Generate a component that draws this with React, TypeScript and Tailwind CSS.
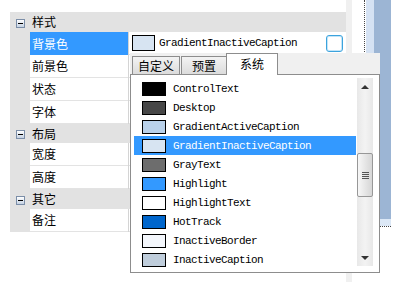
import React from 'react'

const sections = [
  { name: '样式', h: 'h-[20px]', items: ['背景色', '前景色', '状态', '字体'] },
  { name: '布局', h: 'h-[19px]', items: ['宽度', '高度'] },
  { name: '其它', h: 'h-[20px]', items: ['备注'] },
]

const colors = [
  { name: 'ControlText', color: '#000000' },
  { name: 'Desktop', color: '#474747' },
  { name: 'GradientActiveCaption', color: '#b9d1ea' },
  { name: 'GradientInactiveCaption', color: '#d7e4f2' },
  { name: 'GrayText', color: '#6d6d6d' },
  { name: 'Highlight', color: '#3399ff' },
  { name: 'HighlightText', color: '#ffffff' },
  { name: 'HotTrack', color: '#0066cc' },
  { name: 'InactiveBorder', color: '#f4f7fc' },
  { name: 'InactiveCaption', color: '#bfcddb' },
]

const mono = "font-['Liberation_Mono',monospace] text-[11px] tracking-[-0.6px]"

function MinusBox() {
  return (
    <div className="w-[9px] h-[9px] border border-[#7b8ea8] bg-gradient-to-b from-white to-[#c5d2e3] flex items-center justify-center">
      <div className="w-[5px] h-px bg-black" />
    </div>
  )
}

function ItemRow({ label, selected }: { label: string; selected?: boolean }) {
  return (
    <div className="flex h-[23px]">
      <div className="w-[20px] bg-[#e2e2e2]" />
      <div
        className={
          selected
            ? 'w-[98px] pl-[2px] flex items-center bg-[#3399ff] text-white'
            : 'w-[98px] pl-[2px] flex items-center border-b border-[#e3e3e3]'
        }
      >
        {label}
      </div>
      <div className="w-px bg-[#d4d4d4]" />
      <div className="flex-1 flex items-center border-b border-[#e3e3e3]">
        {selected && (
          <>
            <div className="ml-[3px] w-[23px] h-[16px] border border-black bg-[#d7e4f2]" />
            <span className={`ml-[4px] pt-[1px] ${mono}`}>GradientInactiveCaption</span>
            <div className="ml-auto mr-[3px] w-[17px] h-[17px] rounded-[3px] border border-[#3ca3dd] bg-white shadow-[inset_0_0_0_1px_#c3e5f8]" />
          </>
        )}
      </div>
    </div>
  )
}

function PropertyGrid() {
  return (
    <div className="w-[336px] flex flex-col">
      {sections.map((s, si) => (
        <div key={s.name}>
          <div className={`flex items-center bg-[#e2e2e2] ${s.h}`}>
            <div className="w-[20px] flex justify-center pt-[2px]">
              <MinusBox />
            </div>
            <span className="pl-[2px]">{s.name}</span>
          </div>
          {s.items.map((it, i) => (
            <ItemRow key={it} label={it} selected={si === 0 && i === 0} />
          ))}
        </div>
      ))}
    </div>
  )
}

function Tab({ label, active, w }: { label: string; active?: boolean; w: string }) {
  if (active) {
    return (
      <div className={`${w} h-[22px] -mb-px -ml-px relative z-10 border border-b-0 border-[#8d8d8d] bg-white flex items-center justify-center pb-[2px]`}>
        {label}
      </div>
    )
  }
  return (
    <div className={`${w} h-[18px] border border-b-0 border-[#8d8d8d] bg-gradient-to-b from-[#f3f3f3] to-[#dcdcdc] flex items-center justify-center`}>
      {label}
    </div>
  )
}

function Scrollbar() {
  return (
    <div className="ml-[1px] w-[16px] h-[188px] flex flex-col bg-gradient-to-r from-[#e8e8e8] via-[#f3f3f3] to-[#e8e8e8]">
      <div className="h-[17px] flex items-center justify-center">
        <div className="w-0 h-0 border-x-[4px] border-x-transparent border-b-[4px] border-b-[#333]" />
      </div>
      <div className="h-[58px]" />
      <div className="h-[44px] rounded-[2px] border border-[#979797] bg-gradient-to-r from-[#f7f7f7] to-[#d6d6d6] flex flex-col items-center justify-center gap-[1px]">
        <div className="w-[7px] h-px bg-[#555]" />
        <div className="w-[7px] h-px bg-[#555]" />
        <div className="w-[7px] h-px bg-[#555]" />
        <div className="w-[7px] h-px bg-[#555]" />
      </div>
      <div className="flex-1" />
      <div className="h-[17px] flex items-center justify-center">
        <div className="w-0 h-0 border-x-[4px] border-x-transparent border-t-[4px] border-t-[#333]" />
      </div>
    </div>
  )
}

function Popup() {
  return (
    <div className="absolute left-[130px] top-[53px] w-[250px] h-[220px] flex flex-col bg-[#f0f0f0]">
      <div className="h-[21px] flex items-end pl-[2px]">
        <Tab label="自定义" w="w-[48px]" />
        <div className="ml-[1px]">
          <Tab label="预置" w="w-[46px]" />
        </div>
        <Tab active label="系统" w="w-[52px]" />
      </div>
      <div className="flex-1 border border-[#8d8d8d] bg-white flex pt-[3px] pl-[3px] pr-[6px]">
        <div className="w-[222px] mt-[1px] flex flex-col">
          {colors.map(c => {
            const sel = c.name === 'GradientInactiveCaption'
            return (
              <div key={c.name} className={`h-[19px] flex items-center ${sel ? 'bg-[#3399ff] text-white' : ''}`}>
                <div className="ml-[8px] w-[24px] h-[14px] border border-black" style={{ backgroundColor: c.color }} />
                <span className={`ml-[7px] pt-[2px] ${mono}`}>{c.name}</span>
              </div>
            )
          })}
        </div>
        <Scrollbar />
      </div>
    </div>
  )
}

export default function App() {
  return (
    <div className="relative w-[404px] h-[287px] bg-white overflow-hidden flex font-['Noto_Sans_CJK_SC',sans-serif] text-[12px] text-black">
      <div className="pl-[10px] pt-[12px]">
        <PropertyGrid />
      </div>
      <div className="w-[6px] h-[282px] bg-[#f0f0f0]" />
      <div className="ml-[12px] w-0 h-[230px] border-l border-dotted border-[#444]" />
      <div className="ml-[1px] w-[25px] flex flex-col">
        <div className="flex h-[219px]">
          <div className="w-[8px] bg-[#d5e2f3]" />
          <div className="flex-1 bg-[#9cb5d4]" />
        </div>
        <div className="h-[7px] bg-[#dce8f6]" />
        <div className="h-[2px] border-t border-dotted border-[#444]" />
      </div>
      <Popup />
    </div>
  )
}
